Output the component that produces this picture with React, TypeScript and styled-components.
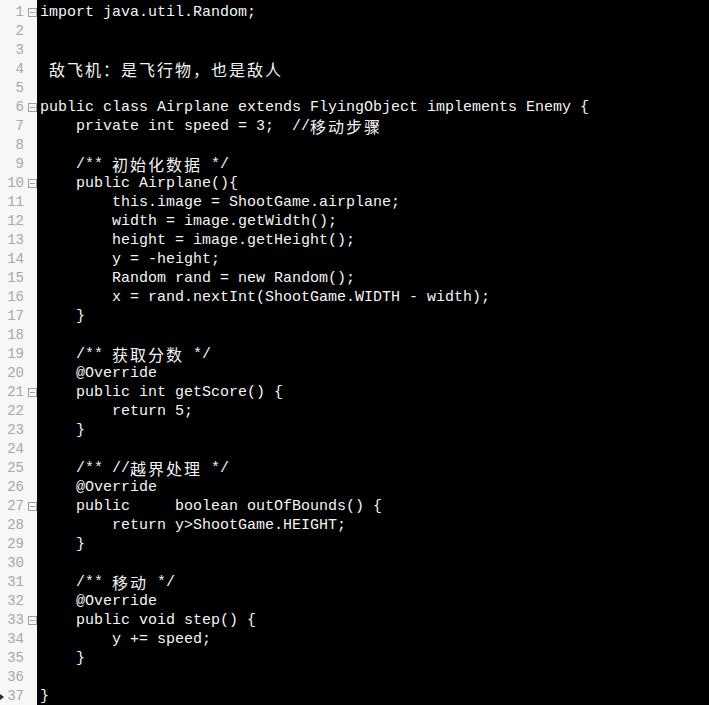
import React from "react";
import styled, { createGlobalStyle } from "styled-components";

const Global = createGlobalStyle`
  html, body { margin: 0; padding: 0; background: #000; }
  #root { width: 709px; height: 705px; overflow: hidden; }
`;

const Editor = styled.div`
  display: flex;
  width: 709px;
  height: 705px;
  background: #000;
  overflow: hidden;
`;

const Gutter = styled.div`
  width: 37px;
  flex: none;
  background: #f7f7f7;
  padding-top: 3px;
  box-sizing: border-box;
`;

const GutterLine = styled.div`
  display: grid;
  grid-template-columns: 5px 1fr 13px;
  align-items: center;
  height: 19px;
`;

const Marker = styled.span<{ $show: boolean }>`
  width: 0;
  height: 0;
  border-top: 3px solid transparent;
  border-bottom: 3px solid transparent;
  border-left: 4px solid ${(p) => (p.$show ? "#1a2a5a" : "transparent")};
`;

const LineNo = styled.span`
  font-family: "Liberation Mono", monospace;
  font-size: 14px;
  color: #a8a8a8;
  text-align: right;
  line-height: 19px;
`;

const FoldSlot = styled.span`
  display: flex;
  align-items: center;
  padding-left: 4px;
`;

const Code = styled.div`
  flex: 1;
  padding: 3px 0 0 3px;
  font-family: "Liberation Mono", monospace;
  font-size: 15px;
  color: #f4f4f4;
`;

const CodeLine = styled.div`
  height: 19px;
  line-height: 19px;
  white-space: pre;
`;

const Cjk = styled.span`
  display: inline-block;
  vertical-align: top;
  padding-top: 1px;
  font-family: "Noto Sans CJK SC", sans-serif;
  font-size: 16px;
  letter-spacing: 2px;
  line-height: 16px;
`;

const lines: string[] = [
  "import java.util.Random;",
  "",
  "",
  " 敌飞机：是飞行物，也是敌人",
  "",
  "public class Airplane extends FlyingObject implements Enemy {",
  "    private int speed = 3;  //移动步骤",
  "",
  "    /** 初始化数据 */",
  "    public Airplane(){",
  "        this.image = ShootGame.airplane;",
  "        width = image.getWidth();",
  "        height = image.getHeight();",
  "        y = -height;",
  "        Random rand = new Random();",
  "        x = rand.nextInt(ShootGame.WIDTH - width);",
  "    }",
  "",
  "    /** 获取分数 */",
  "    @Override",
  "    public int getScore() {",
  "        return 5;",
  "    }",
  "",
  "    /** //越界处理 */",
  "    @Override",
  "    public     boolean outOfBounds() {",
  "        return y>ShootGame.HEIGHT;",
  "    }",
  "",
  "    /** 移动 */",
  "    @Override",
  "    public void step() {",
  "        y += speed;",
  "    }",
  "",
  "}",
];

const folds = new Set([1, 6, 10, 21, 27, 33]);

const FoldIcon = () => (
  <svg width="9" height="9" viewBox="0 0 9 9">
    <rect x="0.5" y="0.5" width="8" height="8" fill="none" stroke="#a0a0a0" strokeWidth="1" />
    <line x1="2" y1="4.5" x2="7" y2="4.5" stroke="#a0a0a0" strokeWidth="1" />
  </svg>
);

const CJK_RE = /([\u3000-\u9fff\uff00-\uffef]+)/;

function renderText(text: string) {
  const parts = text.split(CJK_RE);
  return parts.map((p, i) =>
    i % 2 === 1 ? <Cjk key={i}>{p}</Cjk> : <React.Fragment key={i}>{p}</React.Fragment>
  );
}

export default function App() {
  return (
    <>
      <Global />
      <Editor>
        <Gutter>
          {lines.map((_, i) => (
            <GutterLine key={i}>
              <Marker $show={i === lines.length - 1} />
              <LineNo>{i + 1}</LineNo>
              <FoldSlot>{folds.has(i + 1) ? <FoldIcon /> : null}</FoldSlot>
            </GutterLine>
          ))}
        </Gutter>
        <Code>
          {lines.map((l, i) => (
            <CodeLine key={i}>{l ? renderText(l) : " "}</CodeLine>
          ))}
        </Code>
      </Editor>
    </>
  );
}
